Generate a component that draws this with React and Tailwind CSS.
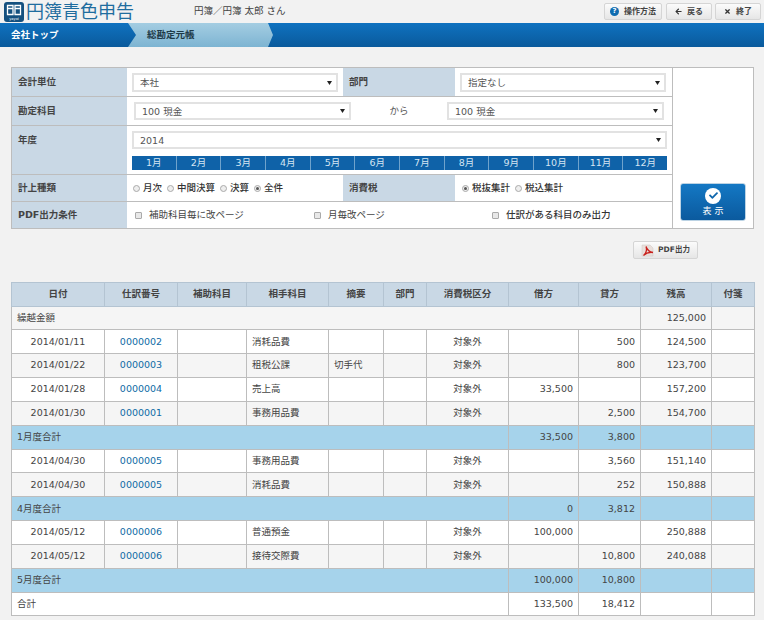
import React from 'react'
import { FaArrowLeft, FaCheck, FaTimes } from 'react-icons/fa'

const months = ['1月', '2月', '3月', '4月', '5月', '6月', '7月', '8月', '9月', '10月', '11月', '12月']

const rows = [
  { type: 'carry', bg: 'bg-[#f5f5f5]', label: '繰越金額', balance: '125,000' },
  { bg: 'bg-white', date: '2014/01/11', no: '0000002', acct: '消耗品費', tax: '対象外', credit: '500', balance: '124,500' },
  { bg: 'bg-[#f5f5f5]', date: '2014/01/22', no: '0000003', acct: '租税公課', memo: '切手代', tax: '対象外', credit: '800', balance: '123,700' },
  { bg: 'bg-white', date: '2014/01/28', no: '0000004', acct: '売上高', tax: '対象外', debit: '33,500', balance: '157,200' },
  { bg: 'bg-[#f5f5f5]', date: '2014/01/30', no: '0000001', acct: '事務用品費', tax: '対象外', credit: '2,500', balance: '154,700' },
  { type: 'sum', bg: 'bg-[#a6d3eb]', label: '1月度合計', debit: '33,500', credit: '3,800' },
  { bg: 'bg-white', date: '2014/04/30', no: '0000005', acct: '事務用品費', tax: '対象外', credit: '3,560', balance: '151,140' },
  { bg: 'bg-[#f5f5f5]', date: '2014/04/30', no: '0000005', acct: '消耗品費', tax: '対象外', credit: '252', balance: '150,888' },
  { type: 'sum', bg: 'bg-[#a6d3eb]', label: '4月度合計', debit: '0', credit: '3,812' },
  { bg: 'bg-white', date: '2014/05/12', no: '0000006', acct: '普通預金', tax: '対象外', debit: '100,000', balance: '250,888' },
  { bg: 'bg-[#f5f5f5]', date: '2014/05/12', no: '0000006', acct: '接待交際費', tax: '対象外', credit: '10,800', balance: '240,088' },
  { type: 'sum', bg: 'bg-[#a6d3eb]', label: '5月度合計', debit: '100,000', credit: '10,800' },
  { type: 'sum', bg: 'bg-white', label: '合計', debit: '133,500', credit: '18,412' },
]

const Select = ({ value, className }) => (
  <div className={`relative ${className}`}>
    <select className="w-full h-full appearance-none bg-white border-2 border-[#e2e2e2] pl-[6px] pt-[1px] text-[9.5px] text-[#555] outline-none">
      <option>{value}</option>
    </select>
    <svg className="absolute right-[6px] top-1/2 -mt-[2px] pointer-events-none" width="5" height="4" viewBox="0 0 5 4"><path d="M0 0h5L2.500 4z" fill="#222" /></svg>
  </div>
)

const Radio = ({ label, checked }) => (
  <span className="flex items-center gap-[3px]">
    <span className="w-[7px] h-[7px] rounded-full border border-[#aaa] bg-[#eee] flex items-center justify-center">
      {checked && <span className="w-[3px] h-[3px] rounded-full bg-[#555]"></span>}
    </span>
    {label}
  </span>
)

const Check = ({ label, className }) => (
  <span className={`flex items-center gap-[7px] ${className}`}>
    <span className="w-[7px] h-[7px] rounded-[1px] border border-[#aaa] bg-[#e8e8e8]"></span>
    {label}
  </span>
)

const Label = ({ children, className }) => (
  <div className={`bg-[#c9d8e5] pl-[6px] font-bold text-[#444] flex ${className}`}>{children}</div>
)

const TopButton = ({ icon, label, className }) => (
  <button className={`h-[17px] flex items-center justify-center gap-[5px] rounded-[2px] border border-[#d5d5d5] bg-gradient-to-b from-[#fbfbfb] to-[#e6e6e6] text-[8px] font-bold text-[#444] ${className}`}>
    {icon}
    {label}
  </button>
)

const App = () => {
  return (
    <div className="w-[764px] h-[620px] overflow-hidden bg-[#f2f2f2] text-[9.5px] text-[#444] font-['DejaVu_Sans','Noto_Sans_CJK_JP',sans-serif]">
      <header className="h-[23px] flex items-center pl-[4px] pr-[3px]">
        <svg width="20" height="20" viewBox="0 0 20 20" className="shrink-0">
          <rect width="20" height="20" rx="3" fill="#14507f" />
          <path d="M3.500 3.500h5.500v9h-5.500z M11 3.500h5.500v9h-5.500z M3.500 6.500h5.500 M11 6.500h5.500" fill="none" stroke="#fff" strokeWidth="1.300" />
          <text x="10" y="17.800" fontSize="3.600" fill="#fff" textAnchor="middle">yayoi</text>
        </svg>
        <span className="ml-[2px] w-[168px] shrink-0 text-[18px] leading-none text-[#1f6d9f]">円簿青色申告</span>
        <span className="text-[#444]">円簿／円簿 太郎 さん</span>
        <div className="ml-auto flex gap-[4px]">
          <TopButton className="w-[58px]" label="操作方法" icon={<span className="w-[9px] h-[9px] rounded-full bg-[#0f6cb0] text-white text-[7px] leading-[9px]">?</span>} />
          <TopButton className="w-[46px]" label="戻る" icon={<FaArrowLeft className="w-[7px] h-[7px] text-[#333]" />} />
          <TopButton className="w-[46px] -ml-[1px]" label="終了" icon={<FaTimes className="w-[7px] h-[7px] text-[#333]" />} />
        </div>
      </header>

      <nav className="h-[24px] flex bg-gradient-to-b from-[#0f72c0] to-[#0a5a9c] text-[9.5px] font-bold">
        <div className="w-[128px] pl-[11px] flex items-center text-white">会社トップ</div>
        <div className="w-[145px] pl-[19px] flex items-center text-[#1d3947] bg-gradient-to-b from-[#a4cde2] to-[#7db4d2] [clip-path:polygon(0_0,calc(100%-5px)_0,100%_50%,calc(100%-5px)_100%,0_100%,8px_50%)]">総勘定元帳</div>
      </nav>

      <section className="ml-[11px] mt-[20px] w-[743px] flex border border-[#bdbdbd] bg-white">
        <div className="w-[660px] shrink-0">
          <div className="h-[29px] flex border-b border-[#bdbdbd]">
            <Label className="w-[115px] pt-[7px]">会計単位</Label>
            <div className="w-[216px] pl-[5px] pt-[5px]"><Select value="本社" className="w-[206px] h-[19px]" /></div>
            <Label className="w-[112px] pt-[7px]">部門</Label>
            <div className="pl-[5px] pt-[5px]"><Select value="指定なし" className="w-[206px] h-[19px]" /></div>
          </div>
          <div className="h-[29px] flex border-b border-[#bdbdbd]">
            <Label className="w-[115px] pt-[7px]">勘定科目</Label>
            <div className="flex-1 flex items-center pl-[7px]">
              <Select value="100 現金" className="w-[217px] h-[18px]" />
              <span className="w-[96px] text-center text-[#555]">から</span>
              <Select value="100 現金" className="w-[217px] h-[18px]" />
            </div>
          </div>
          <div className="h-[49px] flex border-b border-[#bdbdbd]">
            <Label className="w-[115px] pt-[7px]">年度</Label>
            <div className="flex-1 pl-[5px] pt-[5px]">
              <Select value="2014" className="w-[535px] h-[18px]" />
              <div className="w-[535px] h-[14px] mt-[7px] flex bg-[#0f62a8]">
                {months.map((m) => (
                  <span key={m} className="flex-1 flex items-center justify-center border-r last:border-r-0 border-[#6fa3cc] text-[#d6e6f3]">{m}</span>
                ))}
              </div>
            </div>
          </div>
          <div className="h-[27px] flex border-b border-[#bdbdbd]">
            <Label className="w-[115px] items-center">計上種類</Label>
            <div className="w-[216px] pl-[6px] flex items-center gap-[5px] font-medium text-[#333]">
              <Radio label="月次" />
              <Radio label="中間決算" />
              <Radio label="決算" />
              <Radio label="全件" checked />
            </div>
            <Label className="w-[112px] items-center">消費税</Label>
            <div className="pl-[7px] flex items-center gap-[5px] font-medium text-[#333]">
              <Radio label="税抜集計" checked />
              <Radio label="税込集計" />
            </div>
          </div>
          <div className="h-[26px] flex">
            <Label className="w-[115px] items-center">PDF出力条件</Label>
            <div className="flex-1 flex items-center pl-[8px]">
              <Check label="補助科目毎に改ページ" className="w-[179px]" />
              <Check label="月毎改ページ" className="w-[178px]" />
              <Check label="仕訳がある科目のみ出力" className="font-medium text-[#333]" />
            </div>
          </div>
        </div>
        <div className="flex-1 border-l border-[#bdbdbd] flex items-end justify-center pb-[7px]">
          <button className="w-[66px] h-[38px] rounded-[3px] border border-[#bcd3e4] bg-gradient-to-b from-[#1478c4] to-[#0b5a9e] flex flex-col items-center justify-center text-white text-[9px]">
            <span className="w-[16px] h-[16px] rounded-full bg-white flex items-center justify-center"><FaCheck className="w-[9px] h-[9px] text-[#0f67ad]" /></span>
            <span className="mt-[1px] leading-[12px] tracking-[3px] pl-[3px]">表示</span>
          </button>
        </div>
      </section>

      <div className="flex justify-end pr-[66px] mt-[12px]">
        <button className="w-[65px] h-[18px] rounded-[2px] border border-[#d5d5d5] bg-gradient-to-b from-[#fbfbfb] to-[#e6e6e6] flex items-center justify-center gap-[4px] text-[7.5px] font-bold text-[#444]">
          <svg width="13" height="13" viewBox="0 0 13 13"><path d="M1 1h8l3 3v8H1z" fill="#e9dfdb" stroke="#cfc6c2" strokeWidth="0.500" /><path d="M2.500 11.500c3-2 3.500-6.500 2.500-9 1 3 3.500 5.500 7 6-3.500-.5-7 .5-9.500 3z" fill="none" stroke="#c8201c" strokeWidth="1.300" /></svg>
          PDF出力
        </button>
      </div>

      <table className="ml-[11px] mt-[23px] w-[743px] table-fixed border-collapse bg-white">
        <colgroup>
          {[93, 73, 69, 82, 55, 43, 82, 70, 62, 71, 43].map((w, i) => <col key={i} style={{ width: w }} />)}
        </colgroup>
        <thead>
          <tr className="h-[23.5px] bg-[#c9d8e5] font-bold text-[#444]">
            {['日付', '仕訳番号', '補助科目', '相手科目', '摘要', '部門', '消費税区分', '借方', '貸方', '残高', '付箋'].map((h) => (
              <th key={h} className="border border-[#b4c4d2] font-bold">{h}</th>
            ))}
          </tr>
        </thead>
        <tbody>
          {rows.map((r, i) => (
            <tr key={i} className={`h-[23.85px] ${r.bg}`}>
              {r.type === 'carry' && <td colSpan={9} className="border border-[#bdbdbd] pl-[5px]">{r.label}</td>}
              {r.type === 'sum' && <td colSpan={7} className="border border-[#bdbdbd] pl-[5px]">{r.label}</td>}
              {!r.type && (
                <>
                  <td className="border border-[#bdbdbd] text-center">{r.date}</td>
                  <td className="border border-[#bdbdbd] text-center"><a href="#" className="text-[#0f6aa5]">{r.no}</a></td>
                  <td className="border border-[#bdbdbd]"></td>
                  <td className="border border-[#bdbdbd] pl-[5px]">{r.acct}</td>
                  <td className="border border-[#bdbdbd] pl-[5px]">{r.memo}</td>
                  <td className="border border-[#bdbdbd]"></td>
                  <td className="border border-[#bdbdbd] text-center">{r.tax}</td>
                </>
              )}
              {r.type !== 'carry' && (
                <>
                  <td className="border border-[#bdbdbd] text-right pr-[5px]">{r.debit}</td>
                  <td className="border border-[#bdbdbd] text-right pr-[5px]">{r.credit}</td>
                </>
              )}
              <td className="border border-[#bdbdbd] text-right pr-[5px]">{r.balance}</td>
              <td className="border border-[#bdbdbd]"></td>
            </tr>
          ))}
        </tbody>
      </table>
    </div>
  )
}

export default App
